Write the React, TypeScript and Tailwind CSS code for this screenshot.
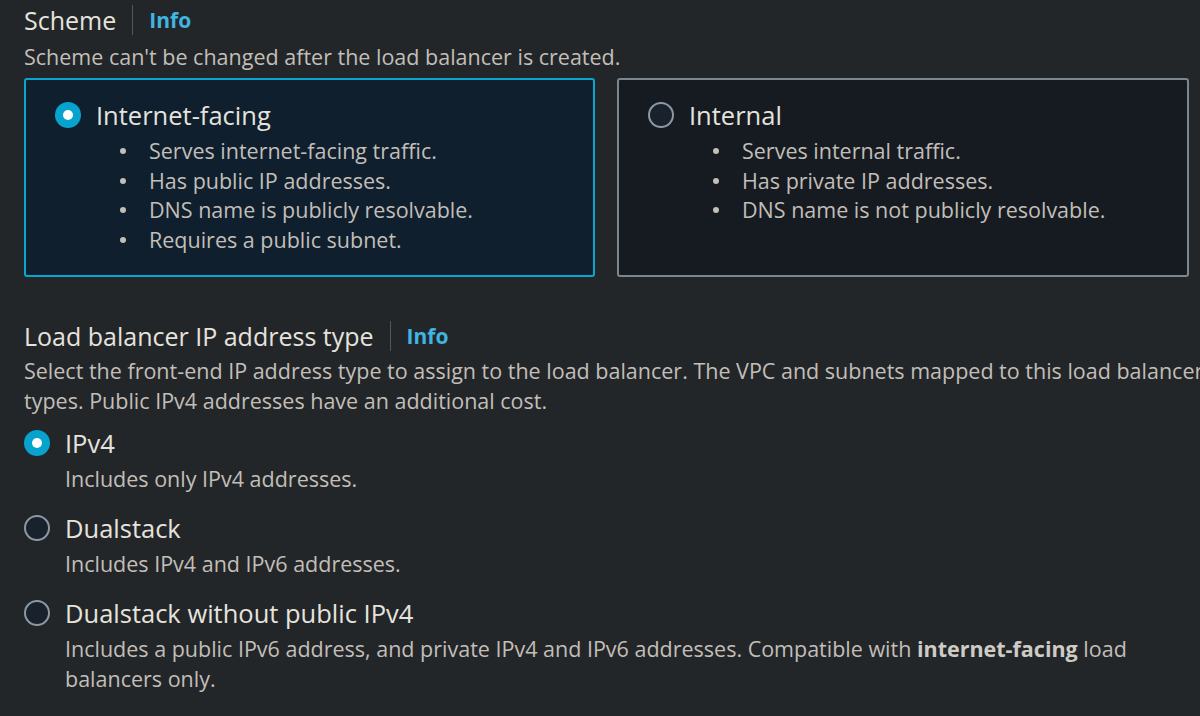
const font = { fontFamily: '"Open Sans", "Noto Sans", sans-serif' }

function Radio({ checked }: { checked: boolean }) {
  if (checked) {
    return (
      <span className="flex h-[26px] w-[26px] shrink-0 items-center justify-center rounded-full bg-[#07a3cf]">
        <span className="h-[10px] w-[10px] rounded-full bg-white" />
      </span>
    )
  }
  return <span className="h-[26px] w-[26px] shrink-0 rounded-full border-2 border-[#8c99a2] bg-[#18212c]" />
}

function Heading({ title }: { title: string }) {
  return (
    <div className="flex items-center">
      <h2 className="text-[25px] leading-[32px] text-[#e6e3de]">{title}</h2>
      <span className="mx-4 h-[30px] w-px bg-[#4f5760]" />
      <a className="text-[21px] font-bold leading-[32px] text-[#40b5e0]">Info</a>
    </div>
  )
}

function Tile({ checked, label, items }: { checked: boolean; label: string; items: string[] }) {
  return (
    <div
      className={
        checked
          ? 'h-[199px] w-[571px] rounded-[3px] border-2 border-[#0aa5d0] bg-[#0f1f2d] pl-[29px] pt-[19px]'
          : 'h-[199px] w-[572px] rounded-[3px] border-2 border-[#7b868f] bg-[#161b21] pl-[29px] pt-[19px]'
      }
    >
      <div className="flex items-center gap-[15px]">
        <Radio checked={checked} />
        <span className="text-[25.5px] leading-[32px] text-[#e6e3de]">{label}</span>
      </div>
      <ul className="mt-[5px] pl-[65px]">
        {items.map((t) => (
          <li key={t} className="flex items-center text-[21.5px] leading-[29.7px] text-[#c2beb8]">
            <span className="mr-[23px] h-[6px] w-[6px] rounded-full bg-[#c2beb8]" />
            {t}
          </li>
        ))}
      </ul>
    </div>
  )
}

function Option({ checked, label, children }: { checked: boolean; label: string; children: React.ReactNode }) {
  return (
    <div>
      <div className="flex items-center gap-[15px]">
        <Radio checked={checked} />
        <span className="text-[25.5px] leading-[32px] text-[#e6e3de]">{label}</span>
      </div>
      <p className="mt-[5px] whitespace-nowrap pl-[41px] text-[21.5px] leading-[30px] text-[#c2beb8]">{children}</p>
    </div>
  )
}

export default function App() {
  return (
    <div className="h-[716px] w-[1200px] overflow-hidden bg-[#232629] pl-6 pt-1" style={font}>
      <div className="w-[1600px]">
        <Heading title="Scheme" />
        <p className="mt-[6px] text-[21.5px] leading-[30px] text-[#c2beb8]">
          Scheme can't be changed after the load balancer is created.
        </p>

        {/* Scheme tiles */}
        <div className="mt-[6px] flex gap-[22px]">
          <Tile
            checked
            label="Internet-facing"
            items={[
              'Serves internet-facing traffic.',
              'Has public IP addresses.',
              'DNS name is publicly resolvable.',
              'Requires a public subnet.',
            ]}
          />
          <Tile
            checked={false}
            label="Internal"
            items={['Serves internal traffic.', 'Has private IP addresses.', 'DNS name is not publicly resolvable.']}
          />
        </div>

        <div className="mt-[43px]">
          <Heading title="Load balancer IP address type" />
        </div>
        <p className="mt-[4px] whitespace-nowrap text-[21.5px] leading-[30px] text-[#c2beb8]">
          Select the front-end IP address type to assign to the load balancer. The VPC and subnets mapped to this load
          balancer must include the selected IP address
          <br />
          types. Public IPv4 addresses have an additional cost.
        </p>

        <div className="mt-[11px] flex flex-col gap-[18px]">
          <Option checked label="IPv4">
            Includes only IPv4 addresses.
          </Option>
          <Option checked={false} label="Dualstack">
            Includes IPv4 and IPv6 addresses.
          </Option>
          <Option checked={false} label="Dualstack without public IPv4">
            Includes a public IPv6 address, and private IPv4 and IPv6 addresses. Compatible with{' '}
            <b className="font-bold text-[#cfcbc5]">internet-facing</b> load
            <br />
            balancers only.
          </Option>
        </div>
      </div>
    </div>
  )
}
